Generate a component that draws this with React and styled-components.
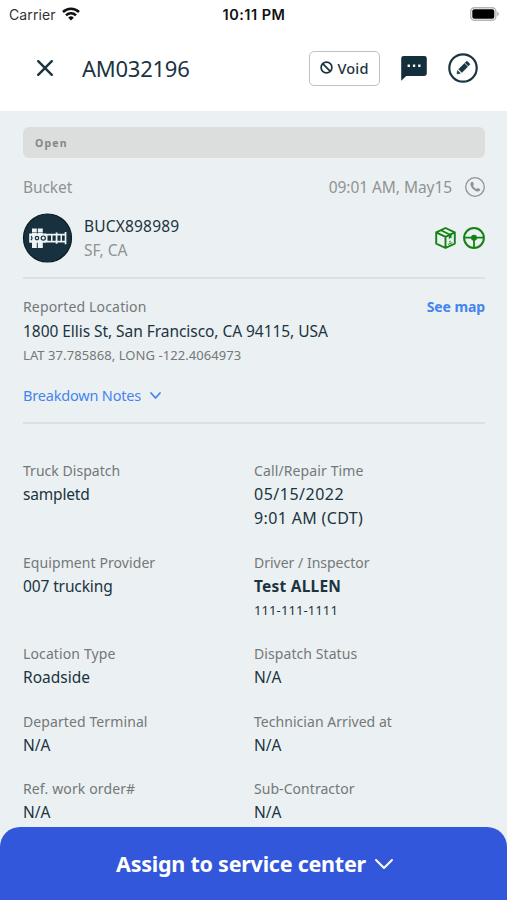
import React from "react";
import styled, { createGlobalStyle } from "styled-components";

const GlobalStyle = createGlobalStyle`
  * { box-sizing: border-box; }
  body { margin: 0; background: #ebf0f2; }
`;

const ink = "#1b343f";
const gray = "#8f9395";
const labelGray = "#737879";
const blue = "#4584ee";

const Screen = styled.div`
  width: 100%;
  height: 100vh;
  overflow: hidden;
  display: flex;
  flex-direction: column;
  background: #ebf0f2;
  color: ${ink};
  font-family: "Noto Sans", sans-serif;
`;

const Icon = styled.svg`
  display: block;
  flex: none;
  overflow: visible;
`;

const Text = styled.span`
  display: block;
  white-space: nowrap;
  font-size: ${(p) => p.$size || 15.5}px;
  line-height: ${(p) => p.$line || 24}px;
  font-weight: ${(p) => p.$weight || 400};
  letter-spacing: ${(p) => p.$track || 0}px;
  color: ${(p) => p.$color || ink};
`;

const StatusBar = styled.div`
  flex: none;
  height: 28px;
  display: grid;
  grid-template-columns: 1fr auto 1fr;
  align-items: center;
  padding: 0 8px 0 9px;
  background: #fff;
  color: #111;
  font-family: Inter, sans-serif;
`;

const Carrier = styled.div`
  display: flex;
  align-items: center;
  gap: 6px;
  font-size: 14px;
  letter-spacing: 0.1px;
  color: #333;
`;

const Clock = styled.div`
  font-size: 14.5px;
  font-weight: 600;
  letter-spacing: 0.5px;
`;

const BatterySlot = styled.div`
  justify-self: end;
`;

const Header = styled.header`
  flex: none;
  height: 83px;
  display: flex;
  align-items: center;
  padding: 0 29px 3px 37px;
  background: #fff;
`;

const Title = styled.h1`
  flex: 1;
  margin: 0 0 0 29px;
  font-size: 22px;
  line-height: 30px;
  font-weight: 400;
  letter-spacing: -0.25px;
`;

const VoidButton = styled.button`
  display: flex;
  align-items: center;
  justify-content: center;
  gap: 4px;
  width: 71px;
  height: 35px;
  margin-right: 21px;
  padding: 0 0 1px;
  border: 1.5px solid #bfc1c2;
  border-radius: 5px;
  background: #fff;
  color: ${ink};
  font: 500 14.5px/20px "Noto Sans", sans-serif;
  letter-spacing: 0.2px;
`;

const HeaderActions = styled.div`
  display: flex;
  align-items: center;
  gap: 21px;
`;

const Content = styled.main`
  flex: 1;
  min-height: 0;
  overflow: hidden;
  padding: 16px 22px 0 23px;
`;

const StatusPill = styled.div`
  height: 31px;
  padding: 1px 12px 0;
  border-radius: 6px;
  background: #dcdddd;
  color: #858686;
  font-size: 10.5px;
  line-height: 31px;
  font-weight: 700;
  letter-spacing: 1.2px;
`;

const Row = styled.div`
  display: flex;
  align-items: center;
  justify-content: space-between;
`;

const BucketRow = styled(Row)`
  margin-top: 17px;
`;

const Inline = styled.div`
  display: flex;
  align-items: center;
  gap: ${(p) => p.$gap}px;
`;

const UnitRow = styled(Row)`
  height: 50px;
  margin-top: 14px;
`;

const Divider = styled.hr`
  height: 2px;
  margin: 0;
  border: 0;
  background: #d5e3e6;
`;

const Location = styled.section`
  padding: 16px 0 14px;
`;

const UnitDivider = styled(Divider)`
  margin-top: 14px;
`;

const NotesToggle = styled(Inline)`
  margin: 15px 0 1px;
`;

const Details = styled.section`
  display: grid;
  grid-template-columns: 1fr 1fr;
  row-gap: 20.4px;
  padding-top: 34.6px;
`;

const Footer = styled.button`
  flex: none;
  display: flex;
  align-items: center;
  justify-content: center;
  gap: 9px;
  height: 73px;
  padding: 0 0 0 2px;
  border: 0;
  border-radius: 20px 20px 0 0;
  background: #3257da;
  color: #fff;
  font: 700 21.5px/30px "Noto Sans", sans-serif;
  letter-spacing: -0.24px;
`;

const WifiIcon = () => (
  <Icon width="18" height="14" viewBox="0 0 18 14" fill="none" stroke="#111" strokeWidth="2.5">
    <path d="M1 5a11.4 11.4 0 0 1 16 0" />
    <path d="M4 8.3a7.1 7.1 0 0 1 10 0" />
    <path d="M9 13.6 6.2 10.7a4 4 0 0 1 5.6 0z" fill="#111" stroke="none" />
  </Icon>
);

const BatteryIcon = () => (
  <Icon width="29" height="14" viewBox="0 0 29 14">
    <rect x=".7" y=".7" width="25.2" height="12.6" rx="3.8" fill="#fff" stroke="#b5b5b5" strokeWidth="1.4" />
    <rect x="2.3" y="2.3" width="22" height="9.4" rx="2" fill="#000" />
    <path d="M27.3 4.8c2 .7 2 3.7 0 4.4z" fill="#aaa" />
  </Icon>
);

const CloseIcon = () => (
  <Icon width="16" height="16" viewBox="0 0 16 16" stroke={ink} strokeWidth="2.4" strokeLinecap="round">
    <path d="m1.2 1.2 13.6 13.6M14.8 1.2 1.2 14.8" />
  </Icon>
);

const BanIcon = () => (
  <Icon width="13" height="13" viewBox="0 0 13 13" fill="none" stroke={ink} strokeWidth="1.7">
    <circle cx="6.5" cy="6.5" r="5.4" />
    <path d="m2.7 2.7 7.6 7.6" />
  </Icon>
);

const MessageIcon = () => (
  <Icon width="26" height="25" viewBox="0 0 26 25">
    <path d="M2.6 0h20.8A2.4 2.4 0 0 1 25.8 2.4v15.2a2.4 2.4 0 0 1-2.4 2.4H5.2L.2 24.8V2.4A2.4 2.4 0 0 1 2.6 0z" fill="#132f3b" />
    <path d="M6.6 8.6h2.3v2.4H6.6zM11.9 8.6h2.3v2.4h-2.3zM17.2 8.6h2.3v2.4h-2.3z" fill="#fff" />
  </Icon>
);

const EditIcon = () => (
  <Icon width="30" height="30" viewBox="0 0 30 30">
    <circle cx="15" cy="15" r="13.7" fill="none" stroke={ink} strokeWidth="2.2" />
    <path d="m9 21 .5-3.6 2.9 2.9zM10.6 16.2l5.8-5.8 3.3 3.3-5.8 5.8zM17.1 9.7l1-1q.8-.8 1.6 0l1.7 1.7q.8.8 0 1.6l-1 1z" fill={ink} stroke={ink} strokeWidth=".5" />
  </Icon>
);

const PhoneIcon = () => (
  <Icon width="20" height="20" viewBox="0 0 20 20">
    <circle cx="10" cy="10" r="9.3" fill="none" stroke={gray} strokeWidth="1.3" />
    <path d="M6.2 5.3c.7-.7 1.4-.7 1.8 0l.8 1.5c.3.6-.2 1.1-.8 1.7.6 1.6 1.8 2.8 3.5 3.5.6-.6 1.1-1.1 1.7-.8l1.5.8c.7.4.7 1.1 0 1.8-1 1.1-2.4 1-4 .2-2.1-1-3.7-2.7-4.7-4.7-.8-1.6-.9-3 .2-4z" fill={gray} />
  </Icon>
);

const ChassisIcon = () => (
  <Icon width="49" height="50" viewBox="0 0 49 50">
    <circle cx="24.5" cy="25" r="24" fill="#17323e" stroke="#0b1c25" strokeWidth="1.2" />
    <g fill="#eef3f4">
      <path d="M9 15.5h4.8v4H9zM14.8 15.5h5v4h-5zM9 31h4.8v4H9zM14.8 31h5v4h-5z" />
      <path d="M6.2 20.5H23v9.3H6.2zM9 19.9h4.8v11H9zM14.8 19.9h5v11h-5z" />
      <path d="M22 20.7h21v1.8H22zM22 27.8h21v1.8H22zM28 21.5h1.5v7H28zM32.7 19.5h1.8v11.3h-1.8zM37.5 21.5H39v7h-1.5zM41.7 19h1.7v12.2h-1.7zM23 21h1.5v8H23z" />
    </g>
    <g fill="#eef3f4" stroke="#17323e" strokeWidth="1.2">
      <path d="M8 23.2q2 1.9 0 3.8" fill="none" />
      <circle cx="14" cy="25.1" r="1.7" />
      <circle cx="20.3" cy="25.1" r="2.1" />
    </g>
  </Icon>
);

const BoxIcon = () => (
  <Icon width="21" height="22" viewBox="0 0 21 22" fill="none" stroke="#128212" strokeWidth="1.9" strokeLinejoin="round">
    <path d="m10.5 1 9.3 4.4v11.2L10.5 21l-9.3-4.4V5.4zM1.2 5.4l9.3 4.4 9.3-4.4M10.5 9.8V21" />
    <path d="m5.8 3.2 8.9 4.3" strokeWidth="1.6" />
    <path d="m13.8 8.2 2.8-1.3v4.3l-1.3-.4-1.5 1.8z" fill="#128212" stroke="none" />
    <path d="m13.2 17.4 3.9-1.8M14 15l1.7-.8" strokeWidth="1" />
  </Icon>
);

const SteeringIcon = () => (
  <Icon width="22" height="22" viewBox="0 0 22 22" fill="none" stroke="#128212" strokeWidth="2">
    <circle cx="11" cy="11" r="9.9" />
    <path d="M1.5 10.6h19M11 12v9" strokeWidth="1.8" />
    <circle cx="11" cy="10.8" r="3" fill="#128212" stroke="none" />
  </Icon>
);

const Chevron = ({ width, height, stroke, weight }) => (
  <Icon width={width} height={height} viewBox={`0 0 ${width} ${height}`} fill="none" stroke={stroke} strokeWidth={weight} strokeLinecap="round" strokeLinejoin="round">
    <path d={`M1 1 L${width / 2} ${height - 1} L${width - 1} 1`} />
  </Icon>
);

const Field = ({ label, track, children }) => (
  <div>
    <Text $size={14} $line={23} $track={track} $color={labelGray}>{label}</Text>
    {children}
  </div>
);

const simpleFields = [
  ["Location Type", 0.12, "Roadside", 0],
  ["Dispatch Status", 0.08, "N/A", 0],
  ["Departed Terminal", 0.1, "N/A", 0],
  ["Technician Arrived at", 0.04, "N/A", 0],
  ["Ref. work order#", 0.13, "N/A", 0],
  ["Sub-Contractor", 0.05, "N/A", 0],
];

export default function App() {
  return (
    <Screen>
      <GlobalStyle />
      <StatusBar>
        <Carrier>Carrier <WifiIcon /></Carrier>
        <Clock>10:11 PM</Clock>
        <BatterySlot><BatteryIcon /></BatterySlot>
      </StatusBar>
      <Header>
        <CloseIcon />
        <Title>AM032196</Title>
        <VoidButton><BanIcon />Void</VoidButton>
        <HeaderActions>
          <MessageIcon />
          <EditIcon />
        </HeaderActions>
      </Header>
      <Content>
        <StatusPill>Open</StatusPill>
        <BucketRow>
          <Text $color={gray} $track={-0.08}>Bucket</Text>
          <Inline $gap={13}>
            <Text $color={gray} $track={-0.06}>09:01 AM, May15</Text>
            <PhoneIcon />
          </Inline>
        </BucketRow>
        <UnitRow>
          <Inline $gap={12}>
            <ChassisIcon />
            <div>
              <Text $track={0.18}>BUCX898989</Text>
              <Text $color={gray} $line={25}>SF, CA</Text>
            </div>
          </Inline>
          <Inline $gap={7}>
            <BoxIcon />
            <SteeringIcon />
          </Inline>
        </UnitRow>
        <UnitDivider />
        <Location>
          <Row>
            <Text $size={14} $track={0.16} $color={labelGray}>Reported Location</Text>
            <Text $size={14} $weight={700} $track={-0.1} $color={blue}>See map</Text>
          </Row>
          <Text $track={-0.05}>1800 Ellis St, San Francisco, CA 94115, USA</Text>
          <Text $size={13} $track={0.07} $color={labelGray} $line={25}>LAT 37.785868, LONG -122.4064973</Text>
          <NotesToggle $gap={9}>
            <Text $size={14.5} $track={-0.19} $color={blue}>Breakdown Notes</Text>
            <Chevron width={11} height={7} stroke={blue} weight={1.8} />
          </NotesToggle>
        </Location>
        <Divider />
        <Details>
          <Field label="Truck Dispatch" track={0.03}>
            <Text $track={-0.18}>sampletd</Text>
          </Field>
          <Field label="Call/Repair Time" track={0.12}>
            <Text $size={16} $track={0.5}>05/15/2022</Text>
            <Text $size={16} $track={0.35} $line={25}>9:01 AM (CDT)</Text>
          </Field>
          <Field label="Equipment Provider" track={0.08}>
            <Text $track={-0.12}>007 trucking</Text>
          </Field>
          <Field label="Driver / Inspector" track={0}>
            <Text $weight={700} $track={0.22}>Test ALLEN</Text>
            <Text $size={13} $track={0.1}>111-111-1111</Text>
          </Field>
          {simpleFields.map(([label, track, value, valueTrack]) => (
            <Field key={label} label={label} track={track}>
              <Text $track={valueTrack}>{value}</Text>
            </Field>
          ))}
        </Details>
      </Content>
      <Footer>
        Assign to service center
        <Chevron width={18} height={10} stroke="#fff" weight={2} />
      </Footer>
    </Screen>
  );
}
